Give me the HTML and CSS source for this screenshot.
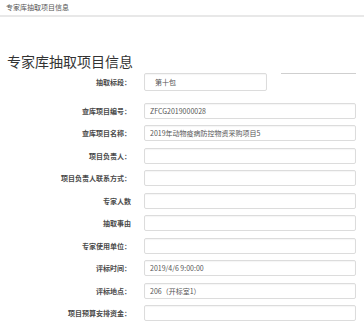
FILE: index.html
```html
<!DOCTYPE html>
<html lang="zh-CN">
<head>
    <meta charset="UTF-8">
    <meta name="viewport" content="width=device-width, initial-scale=1.0">
    <title>专家库抽取项目信息</title>
    <link rel="stylesheet" href="styles.css">
</head>
<body>

    <header class="topbar">专家库抽取项目信息</header>

    <h1 class="page-title">专家库抽取项目信息</h1>

    <div class="form">
        <div class="row row-first">
            <label>抽取标段：</label>
            <div class="field field-short">第十包</div>
            <span class="side-line"></span>
        </div>
        <div class="row">
            <label>查库项目编号：</label>
            <div class="field">ZFCG2019000028</div>
        </div>
        <div class="row">
            <label>查库项目名称：</label>
            <div class="field">2019年动物疫病防控物资采购项目5</div>
        </div>
        <div class="row">
            <label>项目负责人：</label>
            <div class="field"></div>
        </div>
        <div class="row">
            <label>项目负责人联系方式：</label>
            <div class="field"></div>
        </div>
        <div class="row">
            <label>专家人数</label>
            <div class="field"></div>
        </div>
        <div class="row">
            <label>抽取事由</label>
            <div class="field"></div>
        </div>
        <div class="row">
            <label>专家使用单位：</label>
            <div class="field"></div>
        </div>
        <div class="row">
            <label>评标时间：</label>
            <div class="field">2019/4/6 9:00:00</div>
        </div>
        <div class="row">
            <label>评标地点：</label>
            <div class="field">206（开标室1）</div>
        </div>
        <div class="row">
            <label>项目预算安排资金：</label>
            <div class="field"></div>
        </div>
    </div>

</body>
</html>
```

FILE: styles.css
```css
body {
    margin: 0;
    padding: 0;
    background: #fff;
    color: #333;
    font-family: "Noto Sans CJK SC", "Liberation Sans", sans-serif;
}

.topbar {
    height: 15px;
    line-height: 15px;
    padding-left: 6px;
    font-size: 7px;
    color: #555;
    border-bottom: 2px solid #e8e8e8;
}

.page-title {
    margin: 36px 0 0 7px;
    font-size: 14px;
    line-height: 16px;
    font-weight: normal;
    color: #333;
}

.form {
    padding: 4px 8px 0 0;
}

.row {
    display: flex;
    align-items: center;
    height: 16px;
    margin-bottom: 6.5px;
}

.row-first {
    height: 18px;
    margin-bottom: 11.5px;
}

.row label {
    width: 131px;
    flex-shrink: 0;
    text-align: right;
    font-size: 7px;
    font-weight: bold;
    color: #4a4a4a;
}

.field {
    flex: 1;
    height: 16px;
    box-sizing: border-box;
    margin-left: 13px;
    padding: 0 5px;
    border: 1px solid #dcdcdc;
    border-radius: 2px;
    box-shadow: inset 0 1px 1px rgba(0, 0, 0, 0.04);
    font-size: 7px;
    line-height: 14px;
    color: #555;
    white-space: nowrap;
    overflow: hidden;
}

.field-short {
    flex: none;
    width: 123px;
    height: 18px;
    line-height: 16px;
    padding-left: 10px;
}

.side-line {
    align-self: flex-start;
    width: 77px;
    margin-left: 14px;
    border-top: 1px solid #cfcfcf;
}
```
